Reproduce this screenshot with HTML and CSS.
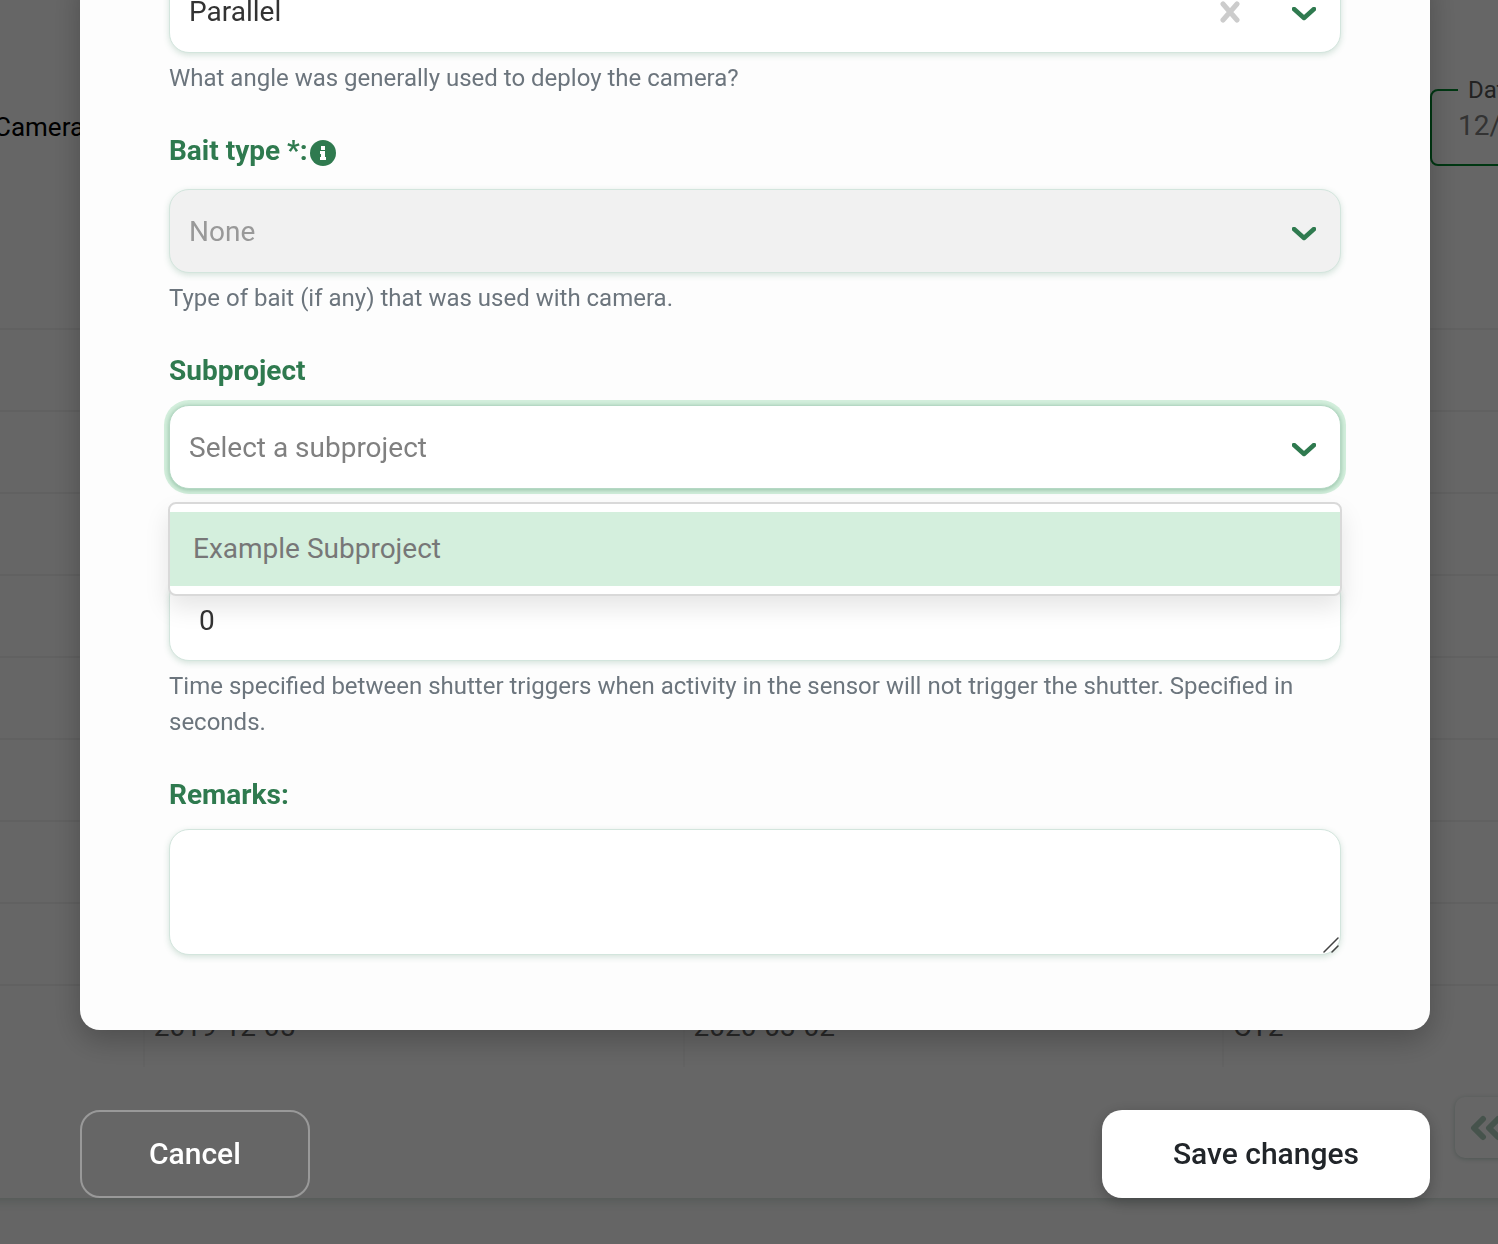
FILE: index.html
```html
<!DOCTYPE html>
<html lang="en">

<head>
    <meta charset="UTF-8">
    <meta name="viewport" content="width=device-width, initial-scale=1.0">
    <title>Edit deployment</title>
    <link rel="stylesheet" href="styles.css">
</head>

<body>
    <main class="page">
        <section class="card">
            <div class="filters">
                <span class="filters-title">Camera</span>
                <fieldset class="date-filter">
                    <legend><label for="date">Date</label></legend>
                    <input type="text" id="date" value="12/05/2019">
                </fieldset>
            </div>
            <table class="deployments">
                <tbody>
                    <tr><td></td><td></td><td></td><td></td></tr>
                    <tr><td></td><td></td><td></td><td></td></tr>
                    <tr><td></td><td></td><td></td><td></td></tr>
                    <tr><td></td><td></td><td></td><td></td></tr>
                    <tr><td></td><td></td><td></td><td></td></tr>
                    <tr><td></td><td></td><td></td><td></td></tr>
                    <tr><td></td><td></td><td></td><td></td></tr>
                    <tr><td></td><td></td><td></td><td></td></tr>
                    <tr><td></td><td>2019-12-05</td><td>2020-03-02</td><td>CT2</td></tr>
                </tbody>
            </table>
            <nav class="pagination">
                <button type="button" class="page-btn" aria-label="First page">
                    <svg width="36" height="28" viewBox="0 0 36 28"><path d="M14 5 5 14l9 9M29 5l-9 9 9 9" /></svg>
                </button>
            </nav>
        </section>
    </main>

    <div class="overlay">
        <form class="dialog">
            <div class="modal">
                <div class="field">
                    <div class="control">
                        <select id="angle" class="input" aria-label="Camera angle">
                            <option>Parallel</option>
                        </select>
                        <button type="button" class="clear" aria-label="Clear">
                            <svg width="20" height="22" viewBox="0 0 20 22"><path d="M3 3l14 16M17 3 3 19" /></svg>
                        </button>
                        <svg class="chevron" width="24" height="14" viewBox="0 0 24 14"><path d="M2 2l10 9L22 2" /></svg>
                    </div>
                    <p class="help">What angle was generally used to deploy the camera?</p>
                </div>

                <div class="field">
                    <div class="label-row">
                        <label for="bait">Bait type *:</label>
                        <svg class="info" width="26" height="26" viewBox="0 0 26 26">
                            <circle cx="13" cy="13" r="13" />
                            <path d="M11 6h4v4h-4zM10 11h5v6h1v3h-6v-3h1v-3h-1z" />
                        </svg>
                    </div>
                    <div class="control">
                        <select id="bait" class="input" disabled>
                            <option>None</option>
                        </select>
                        <svg class="chevron" width="24" height="14" viewBox="0 0 24 14"><path d="M2 2l10 9L22 2" /></svg>
                    </div>
                    <p class="help">Type of bait (if any) that was used with camera.</p>
                </div>

                <div class="field">
                    <label for="subproject">Subproject</label>
                    <div class="control">
                        <select id="subproject" class="input open">
                            <option>Select a subproject</option>
                        </select>
                        <svg class="chevron" width="24" height="14" viewBox="0 0 24 14"><path d="M2 2l10 9L22 2" /></svg>
                        <ul class="menu" role="listbox" aria-label="Subproject">
                            <li class="menu-item" role="option" aria-selected="true">Example Subproject</li>
                        </ul>
                    </div>
                </div>

                <div class="field">
                    <label for="quiet">Quiet period:</label>
                    <div class="control">
                        <input type="number" id="quiet" class="input number" value="0">
                    </div>
                    <p class="help">Time specified between shutter triggers when activity in the sensor will not trigger the shutter. Specified in seconds.</p>
                </div>

                <div class="field">
                    <label for="remarks">Remarks:</label>
                    <div class="control">
                        <textarea id="remarks" class="input remarks"></textarea>
                        <svg class="grip" width="16" height="16" viewBox="0 0 16 16"><path d="M1 15 15 1M9 15l6-6" /></svg>
                    </div>
                </div>
            </div>

            <div class="actions">
                <button type="button" class="btn cancel">Cancel</button>
                <button type="submit" class="btn save">Save changes</button>
            </div>
        </form>
    </div>
</body>

</html>
```
FILE: styles.css
```css
* {
    box-sizing: border-box;
}

body {
    margin: 0;
    min-height: 100vh;
    overflow: hidden;
    background: #fdfdfd;
    color: #333;
    font-family: Roboto, sans-serif;
    font-size: 28px;
    line-height: 36px;
}

button,
input,
select,
textarea {
    font: inherit;
}

svg {
    display: block;
    fill: none;
    stroke-linecap: round;
    stroke-linejoin: round;
}

/* Page behind the dialog */
.page {
    overflow: hidden;
    padding-bottom: 46px;
}

.card {
    margin: 0 -265px 0 -397px;
    background: #fff;
    box-shadow: 0 2px 12px rgba(0, 80, 50, 0.2);
}

.filters {
    display: flex;
    justify-content: space-between;
    align-items: flex-start;
    height: 328px;
    padding: 72px 0 0 391px;
}

.filters-title {
    padding-top: 37px;
    color: #000;
    font-size: 26px;
}

.date-filter {
    width: 333px;
    height: 94px;
    margin: 0;
    padding: 0 26px;
    border: 2px solid #00892f;
    border-radius: 8px;
    color: #555;
}

.date-filter legend {
    padding: 0 10px;
    font-size: 24px;
}

.date-filter input {
    width: 100%;
    padding: 0;
    border: none;
    background: none;
    color: #808080;
}

.deployments {
    width: 100%;
    table-layout: fixed;
    border-collapse: collapse;
}

.deployments td {
    height: 82px;
    padding: 0 9px;
    border-top: 2px solid #f2f2f2;
    border-left: 2px solid #f8f8f8;
    color: #666;
}

.pagination {
    display: flex;
    justify-content: flex-end;
    padding: 30px 0 40px;
}

.page-btn {
    width: 308px;
    height: 61px;
    padding: 0 14px;
    border: none;
    border-radius: 10px;
    background: #fff;
    box-shadow: 0 1px 5px rgba(0, 90, 60, 0.25);
}

.page-btn path {
    stroke: #afd0be;
    stroke-width: 6;
}

/* Dialog */
.overlay {
    position: fixed;
    inset: 0;
    display: flex;
    flex-direction: column;
    justify-content: flex-end;
    padding: 0 68px 46px 80px;
    background: rgba(0, 0, 0, 0.6);
}

.modal {
    display: flex;
    flex-direction: column;
    gap: 36px;
    padding: 0 89px 75px;
    border-radius: 20px;
    background: #fdfdfd;
    box-shadow: 0 10px 30px rgba(0, 0, 0, 0.25);
}

.field label {
    display: block;
    color: #2f7a4f;
    font-weight: 700;
}

.label-row {
    display: flex;
    align-items: flex-start;
    gap: 2px;
    height: 40px;
}

.info {
    margin-top: 7px;
    fill: #2f7a4f;
}

.info path {
    fill: #fff;
}

.control {
    position: relative;
}

.field label + .control,
.label-row + .control {
    margin-top: 16px;
}

.input {
    display: block;
    width: 100%;
    height: 84px;
    padding: 2px 19px 0;
    border: 1px solid #d3e5dd;
    border-radius: 20px;
    outline: none;
    appearance: none;
    background: #fff;
    box-shadow: 0 2px 6px rgba(47, 122, 79, 0.2);
    color: #333;
}

.input:disabled {
    background: #f1f1f1;
    color: #999;
    opacity: 1;
}

.input.open {
    border-color: #b5d8c4;
    box-shadow: 0 1px 5px rgba(47, 122, 79, 0.4), 0 0 0 5px #d4efdd;
    color: #808080;
}

.number {
    padding: 2px 29px 0;
    appearance: textfield;
}

.number::-webkit-inner-spin-button {
    display: none;
}

.remarks {
    height: 126px;
    padding: 20px;
    resize: vertical;
}

.remarks::-webkit-resizer {
    display: none;
}

.grip {
    position: absolute;
    right: 2px;
    bottom: 2px;
    pointer-events: none;
    stroke: #444;
    stroke-width: 1.5;
}

.chevron {
    position: absolute;
    top: 38px;
    right: 25px;
    pointer-events: none;
    stroke: #2f7a4f;
    stroke-width: 4.5;
}

.clear {
    position: absolute;
    top: 32px;
    right: 101px;
    padding: 0;
    border: none;
    background: none;
    stroke: #ccc;
    stroke-width: 5;
}

.help {
    margin: 7px 0 1px;
    color: #6c757d;
    font-size: 24px;
}

.menu {
    position: absolute;
    z-index: 1;
    top: 97px;
    left: -1px;
    right: -1px;
    margin: 0;
    padding: 8px 0;
    border: 2px solid #d9d9d9;
    border-radius: 8px;
    background: #fff;
    box-shadow: 0 12px 24px rgba(0, 0, 0, 0.1);
    list-style: none;
}

.menu-item {
    padding: 19px 23px;
    background: #d4efdd;
    color: #777;
}

.actions {
    display: flex;
    justify-content: space-between;
    margin-top: 80px;
}

.btn {
    height: 88px;
    padding: 0 71px;
    border: none;
    border-radius: 20px;
    font-size: 30px;
    font-weight: 500;
    cursor: pointer;
}

.cancel {
    padding: 0 67px;
    border: 2px solid #999;
    background: none;
    color: #fff;
}

.save {
    background: #fff;
    box-shadow: 0 4px 16px rgba(0, 0, 0, 0.25);
    color: #212529;
}
```
